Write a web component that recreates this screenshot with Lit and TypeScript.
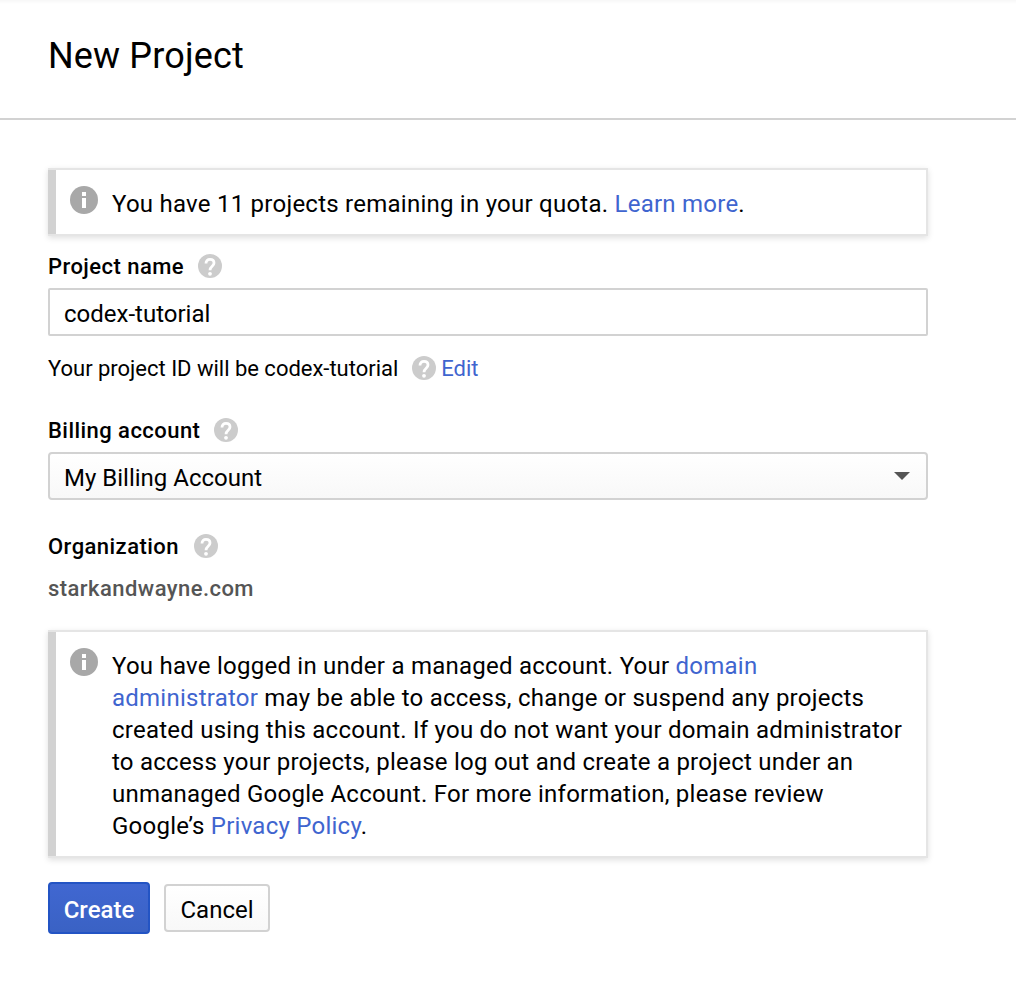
import { LitElement, html, css } from "lit";
import { customElement, property } from "lit/decorators.js";

@customElement("help-icon")
class HelpIcon extends LitElement {
  static styles = css`
    :host { display: block; width: 24px; height: 24px; flex: none; }
    .glyph { display: block; width: 24px; height: 24px; }
    .disc { fill: #ccc; }
    .hook { fill: none; stroke: #fff; stroke-width: 2.8; }
    .dot { fill: #fff; }
  `;
  render() {
    return html`<svg class="glyph" viewBox="0 0 24 24">
      <circle class="disc" cx="12" cy="12" r="12"/>
      <path class="hook" d="M8 9.4C8 6.9 9.6 5.4 12 5.4s4 1.5 4 3.7c0 3.2-4 3.3-4 7.2"/>
      <circle class="dot" cx="12" cy="19.8" r="1.9"/>
    </svg>`;
  }
}

@customElement("info-box")
class InfoBox extends LitElement {
  static styles = css`
    :host { display: block; }
    .box {
      display: grid;
      grid-template-columns: 8px 28px 1fr;
      border: 2px solid #e5e5e5;
      border-left: 0;
      background: #fff;
      box-shadow: 0 2px 6px rgba(0, 0, 0, 0.13);
    }
    .bar { background: #d2d2d2; }
    .icon { display: block; width: 28px; height: 28px; margin: 16px 0 0 14px; }
    .disc { fill: #a8a8a8; }
    .mark { fill: #fff; }
    .copy {
      padding: 18px 20px 14px 28px;
      font-size: 24px;
      line-height: 32px;
      letter-spacing: 0.243px;
    }
  `;
  render() {
    return html`<div class="box">
      <div class="bar"></div>
      <svg class="icon" viewBox="0 0 28 28">
        <circle class="disc" cx="14" cy="14" r="14"/>
        <path class="mark" d="M12 6h4v4h-4zM12 12h4v10h-4z"/>
      </svg>
      <div class="copy"><slot></slot></div>
    </div>`;
  }
}

@customElement("field-label")
class FieldLabel extends LitElement {
  @property() text = "";
  static styles = css`
    :host { display: flex; align-items: center; gap: 14px; height: 32px; }
    .text { padding-top: 2px; font-size: 22px; font-weight: 500; line-height: 30px; letter-spacing: 0.45px; white-space: nowrap; }
  `;
  render() {
    return html`<span class="text">${this.text}</span><help-icon></help-icon>`;
  }
}

@customElement("app-root")
class AppRoot extends LitElement {
  static styles = css`
    :host {
      display: block;
      height: 982px;
      box-sizing: border-box;
      overflow: hidden;
      background: linear-gradient(#f7f7f7, #fff 4px);
      font-family: Roboto, "Liberation Sans", sans-serif;
      color: #000;
    }
    .header {
      box-sizing: border-box;
      height: 120px;
      padding: 32px 48px 0;
      border-bottom: 2px solid #d2d2d2;
    }
    .title { margin: 0; font-size: 36px; font-weight: 400; line-height: 48px; letter-spacing: 0.15px; }
    .content { display: flex; flex-direction: column; width: 880px; padding: 48px 0 0 48px; }
    a { color: #3f65cf; text-decoration: none; }
    .name { margin-top: 14px; }
    .input, .select {
      box-sizing: border-box;
      height: 48px;
      margin-top: 6px;
      padding: 0 14px;
      border: 2px solid #d2d2d2;
      border-radius: 2px;
      font-size: 24px;
      line-height: 48px;
    }
    .select {
      display: flex;
      justify-content: space-between;
      padding-right: 16px;
      border-radius: 4px;
      background: linear-gradient(#fff, #f8f8f8);
    }
    .arrow { width: 16px; height: 8px; margin-top: 18px; fill: #555; }
    .id { display: flex; align-items: center; height: 32px; margin-top: 16px; font-size: 22px; line-height: 30px; letter-spacing: -0.015px; }
    .id span, .id a { padding-top: 2px; }
    .id help-icon { margin: 0 5px 0 14px; }
    .billing { margin-top: 30px; }
    .org { margin-top: 30px; gap: 15px; }
    .domain { margin-top: 10px; padding-top: 2px; font-size: 22px; font-weight: 500; line-height: 30px; letter-spacing: 0.45px; color: #555; }
    .managed { margin-top: 26px; }
    .actions { display: flex; align-items: center; gap: 14px; margin-top: 24px; }
    .btn {
      box-sizing: border-box;
      font-size: 24px;
      text-align: center;
      border: 2px solid #d2d2d2;
      border-radius: 4px;
      width: 106px;
      height: 48px;
      line-height: 48px;
      background: linear-gradient(#fff, #f8f8f8);
    }
    .primary {
      width: 102px;
      height: 52px;
      line-height: 52px;
      color: #fff;
      font-weight: 500;
      border-color: #2354c4;
      background: linear-gradient(#4067d1, #3a62c4);
    }
  `;
  render() {
    return html`
      <div class="header"><h1 class="title">New Project</h1></div>
      <div class="content">
        <info-box>You have 11 projects remaining in your quota. <a>Learn more</a>.</info-box>
        <field-label class="name" text="Project name"></field-label>
        <div class="input">codex-tutorial</div>
        <div class="id"><span>Your project ID will be codex-tutorial</span><help-icon></help-icon><a>Edit</a></div>
        <field-label class="billing" text="Billing account"></field-label>
        <div class="select"><span>My Billing Account</span>
          <svg class="arrow" viewBox="0 0 16 8"><path d="M0 0h16L8 8z"/></svg>
        </div>
        <field-label class="org" text="Organization"></field-label>
        <div class="domain">starkandwayne.com</div>
        <info-box class="managed">You have logged in under a managed account. Your <a>domain administrator</a> may be able to access, change or suspend any projects created using this account. If you do not want your domain administrator to access your projects, please log out and create a project under an unmanaged Google Account. For more information, please review Google’s <a>Privacy Policy</a>.</info-box>
        <div class="actions"><div class="btn primary">Create</div><div class="btn">Cancel</div></div>
      </div>`;
  }
}
